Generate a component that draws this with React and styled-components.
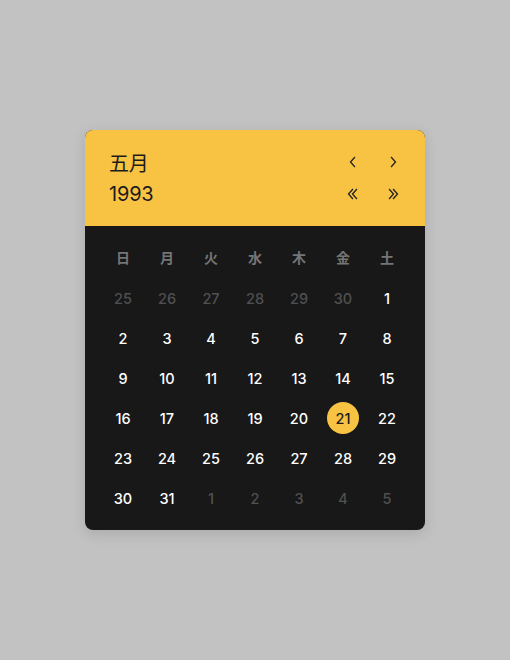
import React from "react";
import styled, { createGlobalStyle } from "styled-components";

const GlobalStyle = createGlobalStyle`
    html, body {
        margin: 0;
        padding: 0;
        background: #c2c2c2;
        font-family: Inter, "Noto Sans CJK JP", sans-serif;
    }
`;

const WEEKDAYS = ["日", "月", "火", "水", "木", "金", "土"];

const buildDays = () => {
    const days = [];
    for (let d = 25; d <= 30; d++) days.push({ n: d, muted: true });
    for (let d = 1; d <= 31; d++) days.push({ n: d });
    for (let d = 1; d <= 5; d++) days.push({ n: d, muted: true });
    return days;
};

const Chevron = ({ dir = "left", double }) => {
    const flip = dir === "right" ? "scale(-1,1) translate(-12,0)" : undefined;
    return (
        <svg width="12" height="12" viewBox="0 0 12 12" fill="none">
            <g transform={flip} stroke="#222" strokeWidth="1.3" strokeLinecap="square">
                {double ? (
                    <>
                        <path d="M5.5 1.5 L1.5 6 L5.5 10.5" />
                        <path d="M9.5 1.5 L5.5 6 L9.5 10.5" />
                    </>
                ) : (
                    <path d="M7.5 1.5 L3.5 6 L7.5 10.5" />
                )}
            </g>
        </svg>
    );
};

export default function App() {
    const days = buildDays();
    return (
        <Page>
            <GlobalStyle />
            <Card>
                <Header>
                    <HeaderRow>
                        <Title>五月</Title>
                        <Nav>
                            <NavButton><Chevron dir="left" /></NavButton>
                            <NavButton><Chevron dir="right" /></NavButton>
                        </Nav>
                    </HeaderRow>
                    <HeaderRow>
                        <Title>1993</Title>
                        <Nav>
                            <NavButton><Chevron dir="left" double /></NavButton>
                            <NavButton><Chevron dir="right" double /></NavButton>
                        </Nav>
                    </HeaderRow>
                </Header>
                <Body>
                    {WEEKDAYS.map(w => <Weekday key={w}>{w}</Weekday>)}
                    {days.map((d, i) => (
                        <Day key={i} $muted={d.muted}>
                            <DayNum $selected={!d.muted && d.n === 21}>{d.n}</DayNum>
                        </Day>
                    ))}
                </Body>
            </Card>
        </Page>
    );
}

const Page = styled.div`
    display: flex;
    justify-content: center;
    align-items: flex-start;
    padding-top: 130px;
    min-height: 660px;
    box-sizing: border-box;
`;

const Card = styled.div`
    width: 340px;
    border-radius: 8px;
    overflow: hidden;
    background: #181818;
    box-shadow: 0 4px 14px rgba(0, 0, 0, 0.12);
`;

const Header = styled.div`
    background: #f8c243;
    padding: 16px 20px 16px 24px;
    display: flex;
    flex-direction: column;
`;

const HeaderRow = styled.div`
    height: 32px;
    display: flex;
    align-items: center;
    justify-content: space-between;
`;

const Title = styled.div`
    font-size: 20px;
    color: #1c1c1c;
    letter-spacing: -0.2px;
`;

const Nav = styled.div`
    display: flex;
    gap: 16px;
`;

const NavButton = styled.div`
    width: 24px;
    height: 24px;
    display: flex;
    align-items: center;
    justify-content: center;
    cursor: pointer;
`;

const Body = styled.div`
    display: grid;
    grid-template-columns: repeat(7, 44px);
    grid-template-rows: 42px;
    grid-auto-rows: 40px;
    padding: 10px 16px 12px;
`;

const Weekday = styled.div`
    display: flex;
    align-items: center;
    justify-content: center;
    font-size: 14px;
    font-weight: 600;
    color: #757575;
`;

const Day = styled.div`
    display: flex;
    align-items: center;
    justify-content: center;
    font-size: 14.5px;
    font-weight: 500;
    color: ${p => (p.$muted ? "#505050" : "#fff")};
`;

const DayNum = styled.div`
    width: 32px;
    height: 32px;
    border-radius: 50%;
    display: flex;
    align-items: center;
    justify-content: center;
    background: ${p => (p.$selected ? "#f8c243" : "transparent")};
    color: ${p => (p.$selected ? "#1c1c1c" : "inherit")};
`;
